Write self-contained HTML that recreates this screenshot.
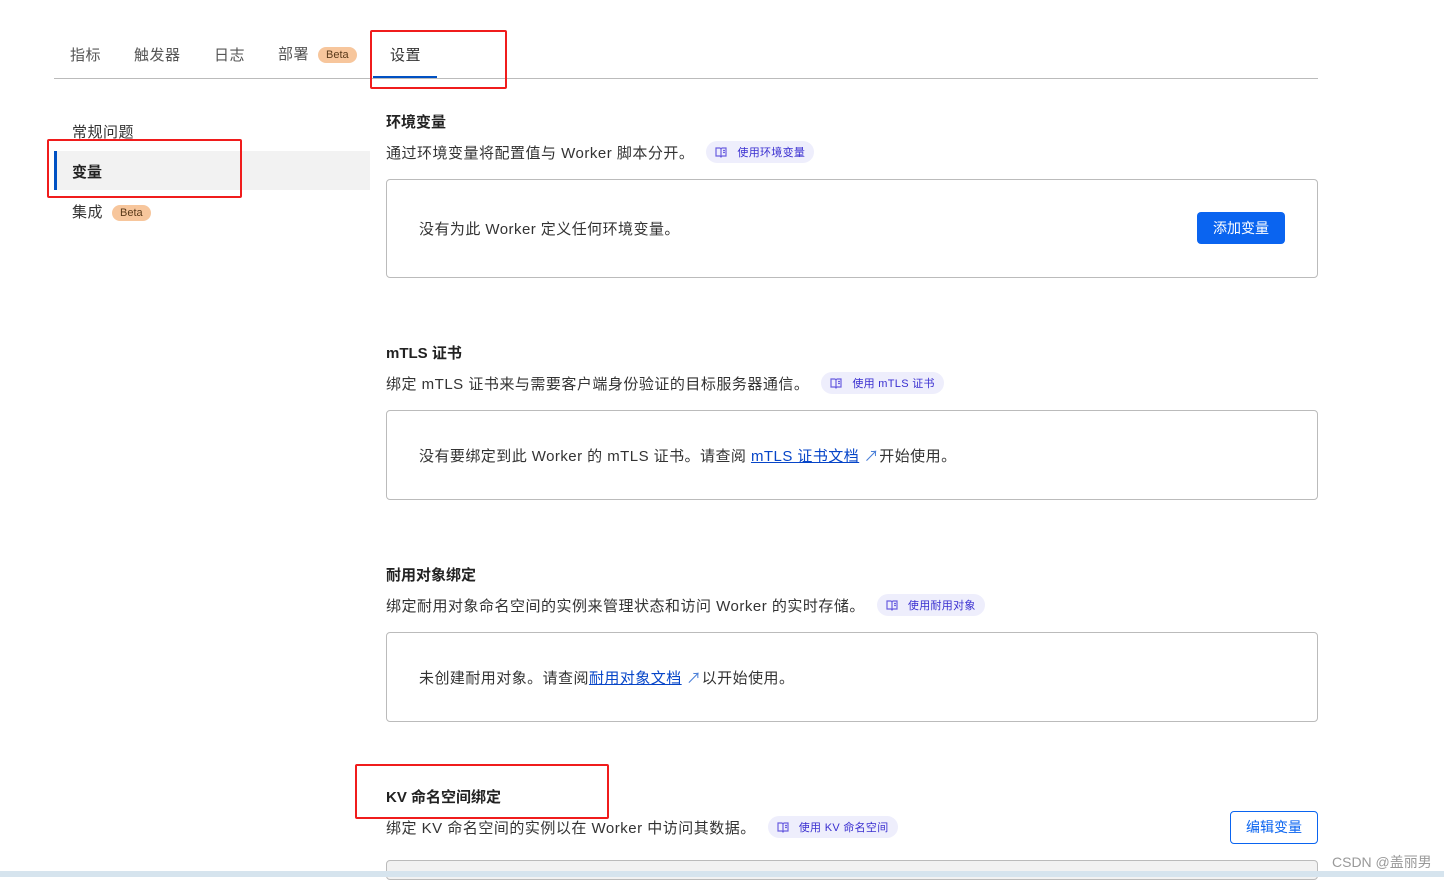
<!DOCTYPE html>
<html><head><meta charset="utf-8"><style>
*{margin:0;padding:0;box-sizing:border-box}
body{width:1444px;height:877px;overflow:hidden;background:#fff;position:relative;font-family:"Liberation Sans","Noto Sans CJK SC",sans-serif;color:#222;font-size:15px}
.a{position:absolute;white-space:nowrap}
.tab{top:44px;color:#555;font-size:15px;letter-spacing:0.5px}
.badge{display:inline-block;background:#f7c69c;color:#5a3a1a;font-size:11px;border-radius:10px;padding:2px 8px;vertical-align:middle;margin-left:9px;letter-spacing:0}
.red{position:absolute;border:2.5px solid #f01c1c;border-radius:2px}
.h{font-weight:bold;font-size:15px;color:#222;top:0}
.d{font-size:15px;color:#333;letter-spacing:0.5px}
.pill{display:inline-block;background:#eeeefc;color:#3a2fd0;font-size:11px;border-radius:11px;padding:3px 9px 3px 9px;margin-left:12px;vertical-align:2px;letter-spacing:0.3px}
.pill svg{vertical-align:-2px;margin-right:10px}
.box{position:absolute;left:386px;width:932px;border:1px solid #bbb;border-radius:4px;background:#fff}
.bt{position:absolute;left:32px;font-size:15px;color:#333;letter-spacing:0.45px;white-space:nowrap}
a{color:#0645c8;text-decoration:underline}
</style></head><body>
<div class="a tab" style="left:70px">指标</div>
<div class="a tab" style="left:134px">触发器</div>
<div class="a tab" style="left:214px">日志</div>
<div class="a tab" style="left:278px;top:43px">部署<span class="badge">Beta</span></div>
<div class="a tab" style="left:390px;color:#333">设置</div>
<div class="a" style="left:54px;top:78px;width:1264px;height:1px;background:#bbb"></div>
<div class="a" style="left:373px;top:76px;width:64px;height:2px;background:#0051c3"></div>

<div class="a" style="left:72px;top:121px;color:#333;letter-spacing:0.5px">常规问题</div>
<div class="a" style="left:54px;top:151px;width:316px;height:39px;background:#f2f2f2;border-left:3px solid #0051c3"></div>
<div class="a" style="left:72px;top:161px;font-weight:bold">变量</div>
<div class="a" style="left:72px;top:201px;color:#333;letter-spacing:0.5px">集成<span class="badge">Beta</span></div>

<svg width="0" height="0" style="position:absolute"><defs><symbol id="bk" viewBox="0 0 12 12"><path d="M1 2h4l1 1 1-1h4v8H7l-1 1-1-1H1z M6 3v8 M8 4.5h2 M8 6.5h2" fill="none" stroke="#6b5fe0" stroke-width="1.2"/></symbol></defs></svg>

<div class="a h" style="left:386px;top:111px">环境变量</div>
<div class="a d" style="left:386px;top:141px">通过环境变量将配置值与 Worker 脚本分开。<span class="pill"><svg width="12" height="12"><use href="#bk"/></svg>使用环境变量</span></div>
<div class="box" style="top:179px;height:99px"><div class="bt" style="top:38px">没有为此 Worker 定义任何环境变量。</div>
<div class="a" style="left:810px;top:32px;width:88px;height:32px;background:#0a64f0;color:#fff;border-radius:4px;text-align:center;line-height:32px;font-size:14px">添加变量</div></div>

<div class="a h" style="left:386px;top:342px">mTLS 证书</div>
<div class="a d" style="left:386px;top:372px">绑定 mTLS 证书来与需要客户端身份验证的目标服务器通信。<span class="pill"><svg width="12" height="12"><use href="#bk"/></svg>使用 mTLS 证书</span></div>
<div class="box" style="top:410px;height:90px"><div class="bt" style="top:34px">没有要绑定到此 Worker 的 mTLS 证书。请查阅 <a>mTLS 证书文档</a> <span style="color:#4a7fd8">↗</span>开始使用。</div></div>

<div class="a h" style="left:386px;top:564px">耐用对象绑定</div>
<div class="a d" style="left:386px;top:594px">绑定耐用对象命名空间的实例来管理状态和访问 Worker 的实时存储。<span class="pill"><svg width="12" height="12"><use href="#bk"/></svg>使用耐用对象</span></div>
<div class="box" style="top:632px;height:90px"><div class="bt" style="top:34px">未创建耐用对象。请查阅<a>耐用对象文档</a> <span style="color:#4a7fd8">↗</span>以开始使用。</div></div>

<div class="a h" style="left:386px;top:786px">KV 命名空间绑定</div>
<div class="a d" style="left:386px;top:816px">绑定 KV 命名空间的实例以在 Worker 中访问其数据。<span class="pill"><svg width="12" height="12"><use href="#bk"/></svg>使用 KV 命名空间</span></div>
<div class="a" style="left:1230px;top:811px;width:88px;height:33px;border:1px solid #0a64f0;color:#0a64f0;border-radius:4px;text-align:center;line-height:31px;font-size:14px">编辑变量</div>
<div class="a" style="left:386px;top:860px;width:932px;height:20px;border:1px solid #bbb;border-radius:4px;background:#f2f2f2"></div>
<div class="a" style="left:0;top:871px;width:1444px;height:6px;background:#d6e4ee"></div>
<div class="a" style="left:1332px;top:852px;font-size:14px;color:#999">CSDN @盖丽男</div>

<div class="red" style="left:370px;top:30px;width:137px;height:59px"></div>
<div class="red" style="left:47px;top:139px;width:195px;height:59px"></div>
<div class="red" style="left:355px;top:764px;width:254px;height:55px"></div>
</body></html>
